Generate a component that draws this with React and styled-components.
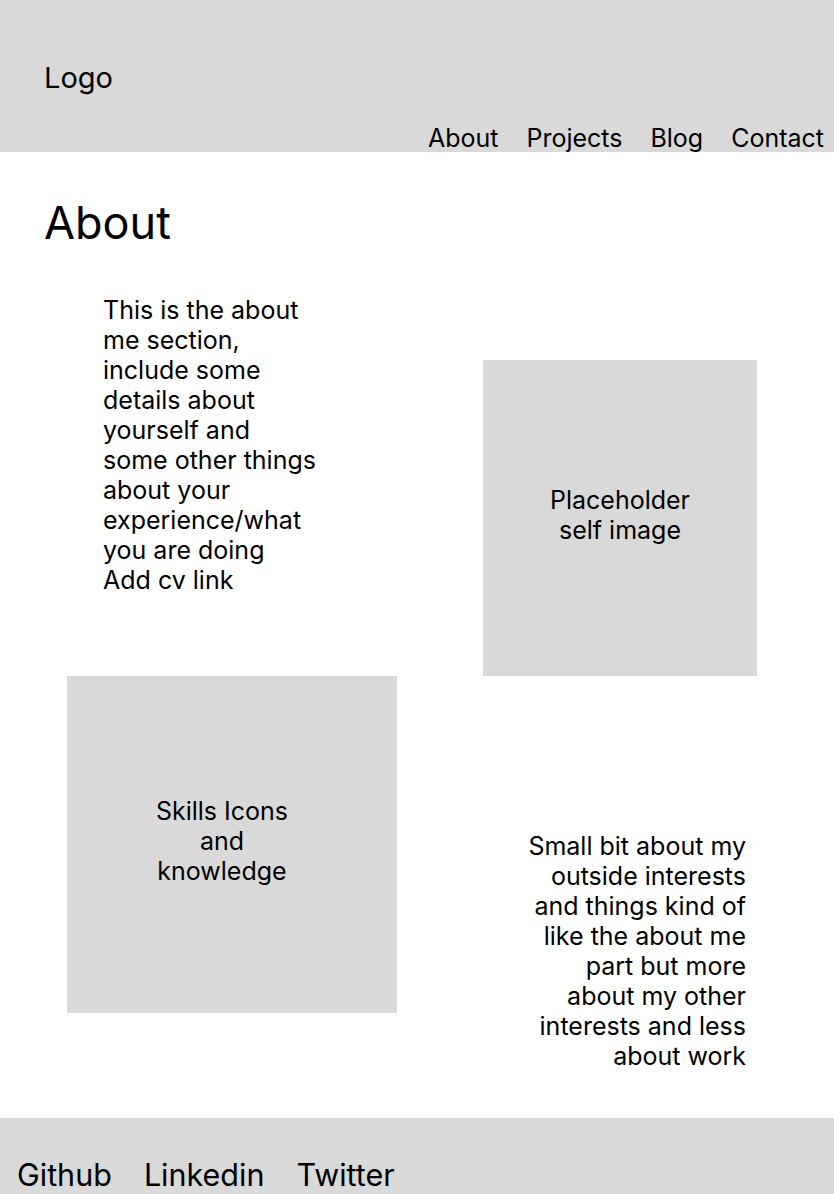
import React from "react";
import styled, { createGlobalStyle } from "styled-components";

const Global = createGlobalStyle`
  html, body { margin: 0; padding: 0; background: #fff; }
  body { font-family: Inter, "Noto Sans", sans-serif; color: #000; }
  * { box-sizing: border-box; }
`;

const Header = styled.header`
  background: #d9d9d9;
  height: 152px;
  display: flex;
  flex-direction: column;
  padding: 60px 10px 0 44px;
`;

const Logo = styled.div`
  font-size: 29px;
  line-height: 35px;
`;

const Nav = styled.nav`
  margin-top: auto;
  display: flex;
  justify-content: flex-end;
  gap: 28px;
  font-size: 25px;
  line-height: 30px;
  margin-bottom: -1px;
`;

const NavLink = styled.a`
  color: inherit;
  text-decoration: none;
`;

const Main = styled.main`
  display: flex;
  flex-direction: column;
`;

const Title = styled.h1`
  margin: 44px 0 0 44px;
  font-size: 45px;
  line-height: 53px;
  font-weight: 400;
`;

const Row = styled.section`
  display: flex;
  justify-content: space-between;
  align-items: flex-start;
  margin-top: ${(p) => p.$top || 0}px;
`;

const Text = styled.p`
  margin: ${(p) => p.$margin};
  width: ${(p) => p.$width}px;
  font-size: 25px;
  line-height: 30px;
  text-align: ${(p) => p.$align || "left"};
`;

const Placeholder = styled.div`
  background: #d9d9d9;
  width: ${(p) => p.$w}px;
  height: ${(p) => p.$h}px;
  margin: ${(p) => p.$margin};
  display: flex;
  align-items: center;
  justify-content: center;
  padding: 0 ${(p) => p.$padRight || 0}px 7px 0;
  flex-shrink: 0;
`;

const BoxLabel = styled.span`
  width: ${(p) => p.$width}px;
  font-size: 25px;
  line-height: 30px;
  text-align: center;
`;

const Footer = styled.footer`
  background: #d9d9d9;
  margin-top: 47px;
  padding: 39px 17px 20px;
  display: flex;
  gap: 32px;
  font-size: 30.5px;
  line-height: 36px;
`;

export default function App() {
  return (
    <>
      <Global />
      <Header>
        <Logo>Logo</Logo>
        <Nav>
          <NavLink>About</NavLink>
          <NavLink>Projects</NavLink>
          <NavLink>Blog</NavLink>
          <NavLink>Contact</NavLink>
        </Nav>
      </Header>
      <Main>
        <Title>About</Title>
        <Row $top={46}>
          <Text $margin="0 0 0 103px" $width={216}>
            This is the about me section, include some details about yourself
            and some other things about your experience/what you are doing
            <br />
            Add cv link
          </Text>
          <Placeholder $w={274} $h={316} $margin="65px 77px 0 0">
            <BoxLabel $width={160}>Placeholder self image</BoxLabel>
          </Placeholder>
        </Row>
        <Row>
          <Placeholder $w={330} $h={337} $margin="0 0 0 67px" $padRight={20}>
            <BoxLabel $width={150}>Skills Icons and knowledge</BoxLabel>
          </Placeholder>
          <Text $margin="155px 88px 0 0" $width={224} $align="right">
            Small bit about my outside interests and things kind of like the
            about me part but more about my other interests and less about work
          </Text>
        </Row>
      </Main>
      <Footer>
        <NavLink>Github</NavLink>
        <NavLink>Linkedin</NavLink>
        <NavLink>Twitter</NavLink>
      </Footer>
    </>
  );
}
